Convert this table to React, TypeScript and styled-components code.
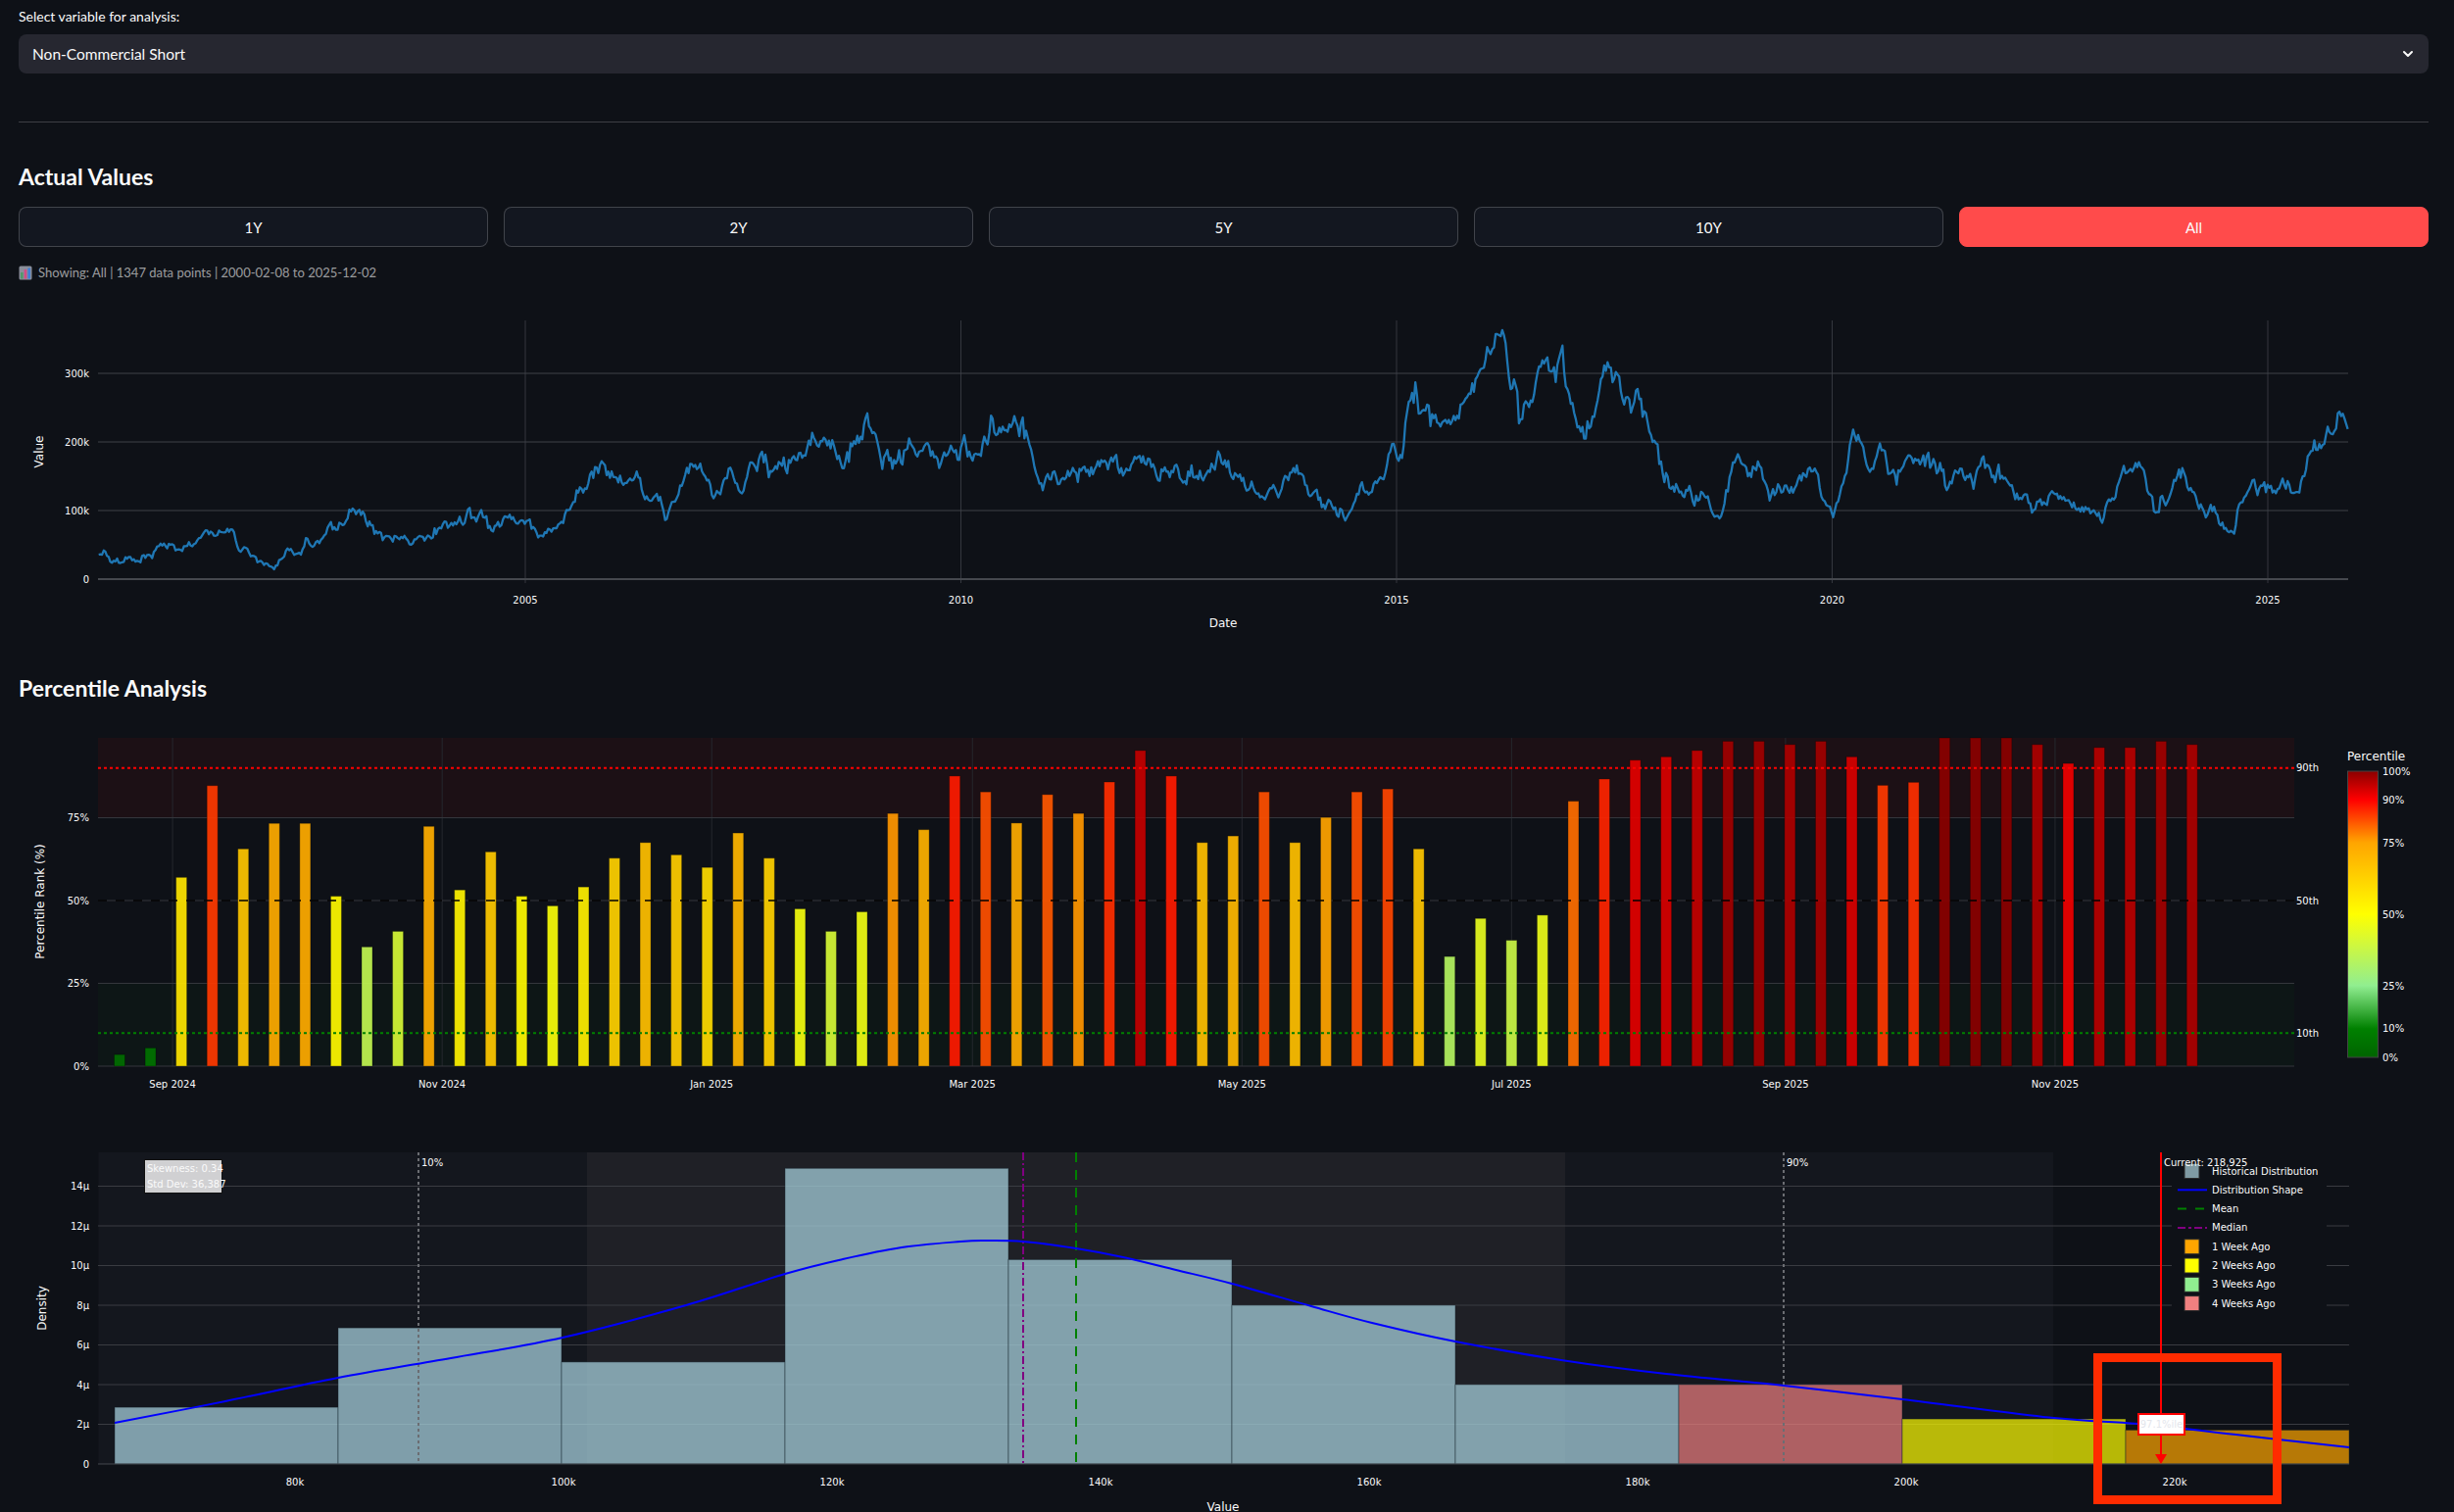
import React from "react";
import styled, { createGlobalStyle } from "styled-components";

const GlobalStyle = createGlobalStyle`
  html, body {
    margin: 0;
    padding: 0;
    background: #0e1117;
    overflow: hidden;
  }
  body {
    font-family: Lato, "Noto Sans", sans-serif;
    color: #fafafa;
  }
`;

const Main = styled.main`
  padding: 7px 26px 0 19px;
`;

const FieldLabel = styled.div`
  font-size: 14px;
  line-height: 20px;
  color: #fafafa;
  margin-bottom: 8px;
`;

const Select = styled.div`
  height: 40px;
  background: #262730;
  border-radius: 8px;
  display: flex;
  align-items: center;
  justify-content: space-between;
  padding: 0 13px 0 14px;
  font-size: 15.5px;
  color: #fafafa;
`;

const Divider = styled.hr`
  margin: 49px 0 0;
  border: none;
  border-top: 1px solid rgba(250, 250, 250, 0.2);
`;

const SectionTitle = styled.h3<{ $gap: number }>`
  margin: ${(p) => p.$gap}px 0 0;
  font-size: 23px;
  line-height: 32px;
  font-weight: 700;
  color: #fafafa;
`;

const ButtonRow = styled.div`
  margin-top: 15px;
  display: flex;
  gap: 16px;
`;

const RangeButton = styled.button<{ $active?: boolean }>`
  flex: 1;
  height: 41px;
  border-radius: 8px;
  font-family: Lato, "Noto Sans", sans-serif;
  font-size: 15px;
  color: #fafafa;
  background: ${(p) => (p.$active ? "#ff4b4b" : "#131720")};
  border: 1px solid ${(p) => (p.$active ? "#ff4b4b" : "rgba(250, 250, 250, 0.2)")};
`;

const Caption = styled.div`
  margin-top: 16px;
  display: flex;
  align-items: center;
  gap: 6px;
  font-size: 13px;
  line-height: 20px;
  color: rgba(250, 250, 250, 0.6);
`;

const ChartWrap = styled.div<{ $gap: number }>`
  position: relative;
  margin-top: ${(p) => p.$gap}px;
`;

const ChartSvg = styled.svg`
  display: block;
`;

const Tick = styled.text`
  font-family: "DejaVu Sans", Verdana, sans-serif;
  font-size: 10px;
  fill: #fafafa;
`;

const AxisTitle = styled.text`
  font-family: "DejaVu Sans", Verdana, sans-serif;
  font-size: 12px;
  fill: #fafafa;
`;

const Highlight = styled.div`
  position: absolute;
  left: 2117px;
  top: 253px;
  width: 192px;
  height: 154px;
  box-sizing: border-box;
  border: 9px solid #ff2b00;
  pointer-events: none;
`;

/* ---------- data helpers ---------- */

function mulberry32(a: number) {
  return function () {
    a |= 0;
    a = (a + 0x6d2b79f5) | 0;
    let t = Math.imul(a ^ (a >>> 15), 1 | a);
    t = (t + Math.imul(t ^ (t >>> 7), 61 | t)) ^ t;
    return ((t ^ (t >>> 14)) >>> 0) / 4294967296;
  };
}

const anchors: [number, number][] = [
  [2000.1, 34], [2000.4, 20], [2000.8, 40], [2001.2, 55], [2001.5, 75], [2001.8, 46],
  [2002.0, 25], [2002.2, 22], [2002.5, 55], [2002.9, 68], [2003.1, 105], [2003.3, 70],
  [2003.7, 55], [2004.2, 78], [2004.5, 95], [2004.9, 80], [2005.2, 70], [2005.5, 95],
  [2005.8, 162], [2006.0, 148], [2006.3, 135], [2006.7, 115], [2006.9, 160], [2007.2, 140],
  [2007.4, 130], [2007.7, 205], [2008.0, 178], [2008.3, 200], [2008.6, 185], [2008.9, 230],
  [2009.1, 190], [2009.4, 210], [2009.8, 183], [2010.1, 172], [2010.4, 225], [2010.7, 250],
  [2010.9, 183], [2011.2, 160], [2011.6, 172], [2011.9, 158], [2012.3, 172], [2012.6, 148],
  [2013.0, 160], [2013.4, 128], [2013.7, 135], [2014.1, 119], [2014.4, 108], [2014.8, 135],
  [2015.0, 175], [2015.2, 290], [2015.5, 215], [2015.8, 260], [2016.0, 325], [2016.2, 350],
  [2016.4, 215], [2016.6, 282], [2016.9, 295], [2017.1, 195], [2017.4, 310], [2017.6, 280],
  [2017.8, 245], [2018.0, 156], [2018.2, 126], [2018.5, 110], [2018.7, 92], [2018.9, 195],
  [2019.1, 160], [2019.4, 114], [2019.7, 160], [2019.9, 103], [2020.0, 75], [2020.2, 180],
  [2020.5, 160], [2020.8, 190], [2021.1, 160], [2021.4, 137], [2021.8, 170], [2022.1, 114],
  [2022.5, 103], [2022.9, 114], [2023.1, 92], [2023.5, 190], [2023.7, 114], [2024.0, 148],
  [2024.2, 114], [2024.5, 82], [2024.7, 126], [2025.0, 137], [2025.3, 126], [2025.5, 160],
  [2025.7, 192], [2025.8, 225], [2025.918, 218.925],
];

function baseAt(t: number) {
  if (t <= anchors[0][0]) return anchors[0][1];
  for (let i = 0; i < anchors.length - 1; i++) {
    const [t0, v0] = anchors[i];
    const [t1, v1] = anchors[i + 1];
    if (t >= t0 && t <= t1) return v0 + ((t - t0) / (t1 - t0)) * (v1 - v0);
  }
  return anchors[anchors.length - 1][1];
}

const N_POINTS = 1347;
const series: number[] = (() => {
  const rnd = mulberry32(1347);
  const out: number[] = [];
  let n = 0;
  for (let i = 0; i < N_POINTS; i++) {
    const t = 2000.104 + (i * 7) / 365.25;
    const base = baseAt(t) * 1000;
    const u1 = Math.max(rnd(), 1e-6);
    const u2 = rnd();
    const g = Math.sqrt(-2 * Math.log(u1)) * Math.cos(2 * Math.PI * u2);
    n = 0.84 * n + g * (2600 + base * 0.032);
    const taper = i > N_POINTS - 4 ? (N_POINTS - 1 - i) / 3 : 1;
    out.push(Math.max(12000, base + n * taper));
  }
  out[N_POINTS - 1] = 218925;
  return out;
})();

const percentiles = [
  3.5, 5.5, 57, 84.7, 65.6, 73.3, 73.3, 51.3, 36, 40.7,
  72.4, 53.2, 64.7, 51.3, 48.4, 54.1, 62.8, 67.5, 63.8, 60,
  70.4, 62.8, 47.5, 40.7, 46.6, 76.3, 71.4, 87.6, 82.8, 73.4,
  82, 76.3, 85.8, 95.3, 87.6, 67.5, 69.5, 82.8, 67.5, 75.1,
  82.8, 83.7, 65.6, 33.1, 44.6, 38, 45.6, 80, 86.7, 92.4,
  93.4, 95.3, 98.1, 98.1, 97.1, 98.1, 93.4, 84.8, 85.7, 100,
  100, 100, 97.1, 91.4, 96.2, 96.2, 98.1, 97.1,
];

const colorStops: [number, string][] = [
  [0, "#006400"], [0.1, "#008000"], [0.25, "#90ee90"], [0.5, "#ffff00"],
  [0.75, "#ffa500"], [0.9, "#ff0000"], [1, "#8b0000"],
];

function hexRgb(h: string) {
  return [1, 3, 5].map((k) => parseInt(h.slice(k, k + 2), 16));
}

function pctColor(p: number) {
  const t = Math.min(1, Math.max(0, p / 100));
  for (let i = 0; i < colorStops.length - 1; i++) {
    const [a, ca] = colorStops[i];
    const [b, cb] = colorStops[i + 1];
    if (t >= a && t <= b) {
      const f = (t - a) / (b - a);
      const A = hexRgb(ca);
      const B = hexRgb(cb);
      const c = A.map((v, k) => Math.round(v + (B[k] - v) * f));
      return `rgb(${c[0]},${c[1]},${c[2]})`;
    }
  }
  return colorStops[colorStops.length - 1][1];
}

function smoothPath(pts: [number, number][]) {
  let d = `M${pts[0][0]},${pts[0][1]}`;
  for (let i = 0; i < pts.length - 1; i++) {
    const p0 = pts[i - 1] || pts[i];
    const p1 = pts[i];
    const p2 = pts[i + 1];
    const p3 = pts[i + 2] || p2;
    const c1x = p1[0] + (p2[0] - p0[0]) / 6;
    const c1y = p1[1] + (p2[1] - p0[1]) / 6;
    const c2x = p2[0] - (p3[0] - p1[0]) / 6;
    const c2y = p2[1] - (p3[1] - p1[1]) / 6;
    d += ` C${c1x.toFixed(1)},${c1y.toFixed(1)} ${c2x.toFixed(1)},${c2y.toFixed(1)} ${p2[0]},${p2[1]}`;
  }
  return d;
}

/* ---------- small pieces ---------- */

const ChevronDown = () => (
  <svg width="16" height="16" viewBox="0 0 24 24">
    <path d="M6 9l6 6 6-6" fill="none" stroke="#fafafa" strokeWidth="3" strokeLinecap="round" strokeLinejoin="round" />
  </svg>
);

const BarChartEmoji = () => (
  <svg width="14" height="15" viewBox="0 0 14 15">
    <rect x="0.5" y="0.5" width="13" height="14" rx="1.5" fill="#8a8f9b" />
    <rect x="2" y="7" width="2.6" height="6.5" fill="#4f9a6a" />
    <rect x="5.7" y="4" width="2.6" height="9.5" fill="#d34a86" />
    <rect x="9.4" y="2.5" width="2.6" height="11" fill="#3f7fd8" />
  </svg>
);

/* ---------- chart 1: actual values ---------- */

const TimeSeriesChart = () => {
  const vy = (v: number) => 301 - v * 0.0007;
  const yearX = (yr: number) => 536 + (yr - 2005) * 88.9;
  const step = (2395.6 - 100.7) / (N_POINTS - 1);
  const d = series
    .map((v, i) => `${i === 0 ? "M" : "L"}${(100.7 + i * step).toFixed(1)},${vy(v).toFixed(1)}`)
    .join("");
  return (
    <ChartSvg width={2459} height={370} viewBox="19 0 2459 370">
      {[2005, 2010, 2015, 2020, 2025].map((yr) => (
        <line key={yr} x1={yearX(yr)} x2={yearX(yr)} y1={37} y2={305} stroke="#34373e" strokeWidth={1} />
      ))}
      {[100000, 200000, 300000].map((v) => (
        <line key={v} x1={100} x2={2396} y1={vy(v)} y2={vy(v)} stroke="#3f4249" strokeWidth={1} />
      ))}
      <line x1={100} x2={2396} y1={301} y2={301} stroke="#45484e" strokeWidth={2} />
      <path d={d} fill="none" stroke="#1f77b4" strokeWidth={2.3} strokeLinejoin="round" />
      {[0, 100000, 200000, 300000].map((v) => (
        <Tick key={v} x={91} y={vy(v) + 3.5} textAnchor="end">
          {v === 0 ? "0" : `${v / 1000}k`}
        </Tick>
      ))}
      {[2005, 2010, 2015, 2020, 2025].map((yr) => (
        <Tick key={yr} x={yearX(yr)} y={325.5} textAnchor="middle">
          {yr}
        </Tick>
      ))}
      <AxisTitle x={1248} y={350} textAnchor="middle">Date</AxisTitle>
      <AxisTitle x={44} y={171} textAnchor="middle" transform="rotate(-90 44 171)">Value</AxisTitle>
    </ChartSvg>
  );
};

/* ---------- chart 2: percentile bars ---------- */

const PercentileChart = () => {
  const py = (p: number) => 370 - p * 3.38;
  const dayX = (days: number) => 122 + days * 4.509;
  const months: [string, number][] = [
    ["Sep 2024", 12], ["Nov 2024", 73], ["Jan 2025", 134], ["Mar 2025", 193],
    ["May 2025", 254], ["Jul 2025", 315], ["Sep 2025", 377], ["Nov 2025", 438],
  ];
  const cbY = (p: number) => 361 - p * 2.92;
  return (
    <ChartSvg width={2459} height={410} viewBox="19 0 2459 410">
      <defs>
        <linearGradient id="pctScale" x1="0" y1="1" x2="0" y2="0">
          {colorStops.map(([o, c]) => (
            <stop key={o} offset={o} stopColor={c} />
          ))}
        </linearGradient>
      </defs>
      <rect x={100} y={35} width={2241} height={py(75) - 35} fill="rgba(255,0,0,0.06)" />
      <rect x={100} y={py(25)} width={2241} height={370 - py(25)} fill="rgba(0,255,0,0.025)" />
      {months.map(([m, d]) => (
        <line key={m} x1={dayX(d)} x2={dayX(d)} y1={35} y2={370} stroke="#25282e" />
      ))}
      {[0, 25, 50, 75].map((p) => (
        <line key={p} x1={100} x2={2341} y1={py(p)} y2={py(p)} stroke="#34363c" />
      ))}
      {percentiles.map((p, i) => {
        const cx = 122 + i * 31.563;
        const top = Math.max(py(p), 35);
        return (
          <rect
            key={i}
            x={cx - 5.5}
            y={top}
            width={11}
            height={370 - top}
            fill={pctColor(p)}
            fillOpacity={0.92}
            stroke="rgba(0,0,0,0.3)"
            strokeWidth={1}
          />
        );
      })}
      <line x1={100} x2={2341} y1={py(90)} y2={py(90)} stroke="#ff0000" strokeWidth={2} strokeDasharray="3 3" />
      <line x1={100} x2={2341} y1={py(50)} y2={py(50)} stroke="#000000" strokeWidth={1.5} strokeDasharray="9 9" />
      <line x1={100} x2={2341} y1={py(10)} y2={py(10)} stroke="#008000" strokeWidth={2} strokeDasharray="3 3" />
      <Tick x={2343} y={py(90) + 3.5}>90th</Tick>
      <Tick x={2343} y={py(50) + 3.5}>50th</Tick>
      <Tick x={2343} y={py(10) + 3.5}>10th</Tick>
      {[0, 25, 50, 75].map((p) => (
        <Tick key={p} x={91} y={py(p) + 3.5} textAnchor="end">
          {p}%
        </Tick>
      ))}
      {months.map(([m, d]) => (
        <Tick key={m} x={dayX(d)} y={391.5} textAnchor="middle">
          {m}
        </Tick>
      ))}
      <AxisTitle x={45} y={202} textAnchor="middle" transform="rotate(-90 45 202)">
        Percentile Rank (%)
      </AxisTitle>
      <AxisTitle x={2395} y={58}>Percentile</AxisTitle>
      <rect x={2395.5} y={69} width={31} height={292} fill="url(#pctScale)" stroke="#444" strokeWidth={1} />
      {[0, 10, 25, 50, 75, 90, 100].map((p) => (
        <Tick key={p} x={2431} y={cbY(p) + 3.5}>
          {p}%
        </Tick>
      ))}
    </ChartSvg>
  );
};

/* ---------- chart 3: distribution histogram ---------- */

const bins: { h: number; color: string }[] = [
  { h: 2.86, color: "#add8e6" },
  { h: 6.86, color: "#add8e6" },
  { h: 5.14, color: "#add8e6" },
  { h: 14.9, color: "#add8e6" },
  { h: 10.3, color: "#add8e6" },
  { h: 8.0, color: "#add8e6" },
  { h: 4.0, color: "#add8e6" },
  { h: 4.0, color: "#f08080" },
  { h: 2.27, color: "#ffff00" },
  { h: 1.71, color: "#ffa500" },
];

const curvePts: [number, number][] = [
  [117, 1452], [230, 1430], [345, 1406], [460, 1386], [574, 1365], [700, 1332],
  [801, 1300], [860, 1285], [920, 1273], [980, 1267], [1006, 1266], [1044, 1267],
  [1098, 1274], [1146, 1283], [1200, 1296], [1257, 1310], [1338, 1333], [1400, 1350],
  [1485, 1369], [1593, 1388], [1700, 1402], [1820, 1414], [1941, 1428], [2096, 1447],
  [2182, 1453], [2290, 1465], [2397, 1477],
].map(([x, y]) => [x, y - 1128] as [number, number]);

const legendItems: { label: string; kind: "box" | "solid" | "dash" | "dashdot"; color: string }[] = [
  { label: "Historical Distribution", kind: "box", color: "#7f9aa3" },
  { label: "Distribution Shape", kind: "solid", color: "#0000ff" },
  { label: "Mean", kind: "dash", color: "#008000" },
  { label: "Median", kind: "dashdot", color: "#800080" },
  { label: "1 Week Ago", kind: "box", color: "#ffa500" },
  { label: "2 Weeks Ago", kind: "box", color: "#ffff00" },
  { label: "3 Weeks Ago", kind: "box", color: "#90ee90" },
  { label: "4 Weeks Ago", kind: "box", color: "#f08080" },
];

const DistributionChart = () => {
  const dy = (mu: number) => 366 - mu * 20.25;
  const vx = (v: number) => 301 + (v - 80000) * 0.0137;
  return (
    <ChartSvg width={2459} height={432} viewBox="19 0 2459 432">
      <rect x={100.5} y={48} width={1994.5} height={318} fill="#14171e" />
      <rect x={599} y={48} width={998} height={318} fill="#1f2026" />
      {[2, 4, 6, 8, 10, 12, 14].map((m) => (
        <line key={m} x1={100} x2={2397} y1={dy(m)} y2={dy(m)} stroke="#3a3c42" />
      ))}
      {bins.map((b, i) => {
        const x = 117 + i * 228;
        return (
          <rect
            key={i}
            x={x}
            y={dy(b.h)}
            width={228}
            height={366 - dy(b.h)}
            fill={b.color}
            fillOpacity={0.7}
            stroke="rgba(20,30,40,0.45)"
            strokeWidth={1}
          />
        );
      })}
      <line x1={100} x2={2397} y1={366} y2={366} stroke="#45484e" />
      <line x1={427} x2={427} y1={48} y2={366} stroke="#6b6d72" strokeWidth={2} strokeDasharray="3 3" />
      <line x1={1820} x2={1820} y1={48} y2={366} stroke="#6b6d72" strokeWidth={2} strokeDasharray="3 3" />
      <Tick x={430} y={61.5}>10%</Tick>
      <Tick x={1823} y={61.5}>90%</Tick>
      <line x1={1044} x2={1044} y1={48} y2={366} stroke="#800080" strokeWidth={2} strokeDasharray="8 3 2 3" />
      <line x1={1098} x2={1098} y1={48} y2={366} stroke="#008000" strokeWidth={2} strokeDasharray="10 8" />
      <path d={smoothPath(curvePts)} fill="none" stroke="#0000ff" strokeWidth={2} />

      <rect x={2216} y={52} width={158} height={165} fill="#0e1117" />
      {legendItems.map((it, i) => {
        const cy = 67 + i * 19.3;
        return (
          <g key={it.label}>
            {it.kind === "box" && (
              <rect x={2229} y={cy - 7.5} width={15} height={15} fill={it.color} stroke="#2a2a2a" strokeWidth={1} />
            )}
            {it.kind === "solid" && <line x1={2222} x2={2252} y1={cy} y2={cy} stroke={it.color} strokeWidth={2} />}
            {it.kind === "dash" && (
              <line x1={2222} x2={2252} y1={cy} y2={cy} stroke={it.color} strokeWidth={2} strokeDasharray="9 9" />
            )}
            {it.kind === "dashdot" && (
              <line x1={2222} x2={2252} y1={cy} y2={cy} stroke={it.color} strokeWidth={2} strokeDasharray="8 3 3 3" />
            )}
            <Tick x={2257} y={cy + 3.5}>{it.label}</Tick>
          </g>
        );
      })}

      <rect x={147.5} y={55.5} width={79} height={34} fill="rgba(255,255,255,0.8)" stroke="#111" strokeWidth={1} />
      <Tick x={150} y={67.5}>Skewness: 0.34</Tick>
      <Tick x={150} y={83.5}>Std Dev: 36,387</Tick>

      <line x1={2205} x2={2205} y1={48} y2={358} stroke="#ff0000" strokeWidth={2} />
      <polygon points="2199,356 2211,356 2205,366" fill="#ff0000" />
      <Tick x={2208} y={62}>Current: 218,925</Tick>
      <rect x={2182} y={315} width={47} height={21} fill="#ffffff" stroke="#ff0000" strokeWidth={2} />
      <Tick x={2205.5} y={329} textAnchor="middle" style={{ fill: "#e4e6ec" }}>
        97.1%ile
      </Tick>

      {[0, 2, 4, 6, 8, 10, 12, 14].map((m) => (
        <Tick key={m} x={91} y={dy(m) + 3.5} textAnchor="end">
          {m === 0 ? "0" : `${m}μ`}
        </Tick>
      ))}
      {[80, 100, 120, 140, 160, 180, 200, 220].map((k) => (
        <Tick key={k} x={vx(k * 1000)} y={387.5} textAnchor="middle">
          {k}k
        </Tick>
      ))}
      <AxisTitle x={1248} y={414} textAnchor="middle">Value</AxisTitle>
      <AxisTitle x={47} y={207} textAnchor="middle" transform="rotate(-90 47 207)">Density</AxisTitle>
    </ChartSvg>
  );
};

/* ---------- page ---------- */

const ranges = ["1Y", "2Y", "5Y", "10Y", "All"];

export default function App() {
  return (
    <>
      <GlobalStyle />
      <Main>
        <FieldLabel>Select variable for analysis:</FieldLabel>
        <Select>
          <span>Non-Commercial Short</span>
          <ChevronDown />
        </Select>
        <Divider />

        <SectionTitle $gap={39}>Actual Values</SectionTitle>
        <ButtonRow>
          {ranges.map((r) => (
            <RangeButton key={r} $active={r === "All"}>
              {r}
            </RangeButton>
          ))}
        </ButtonRow>
        <Caption>
          <BarChartEmoji />
          <span>Showing: All | 1347 data points | 2000-02-08 to 2025-12-02</span>
        </Caption>
        <ChartWrap $gap={2}>
          <TimeSeriesChart />
        </ChartWrap>

        <SectionTitle $gap={26}>Percentile Analysis</SectionTitle>
        <ChartWrap $gap={0}>
          <PercentileChart />
        </ChartWrap>
        <ChartWrap $gap={0}>
          <DistributionChart />
          <Highlight />
        </ChartWrap>
      </Main>
    </>
  );
}
